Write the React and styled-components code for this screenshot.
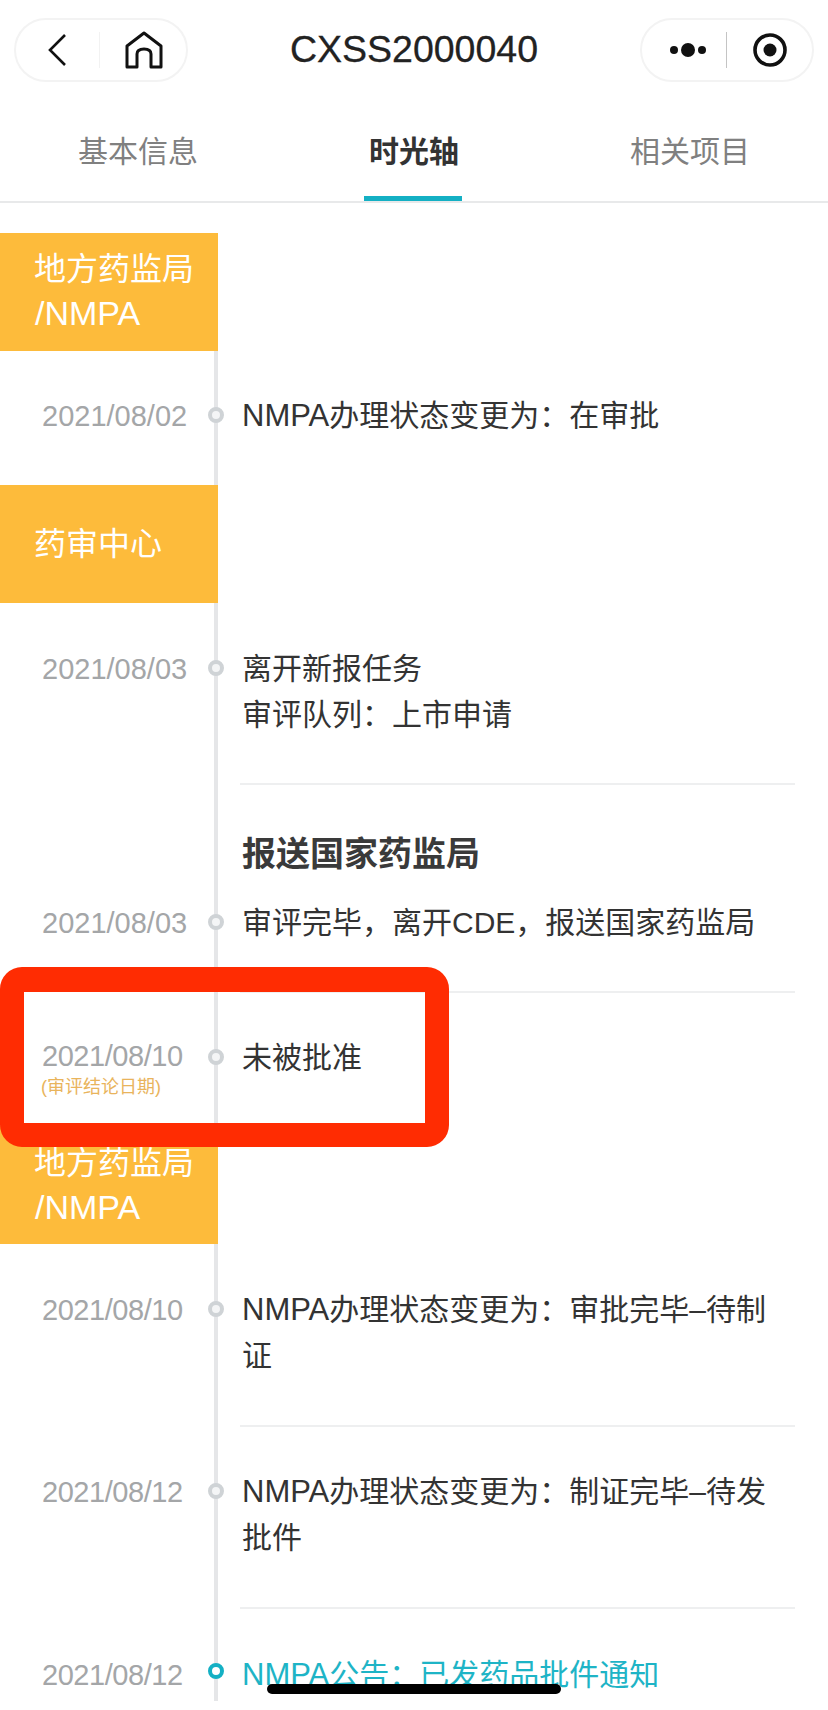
import styled, { createGlobalStyle } from 'styled-components';

const GlobalStyle = createGlobalStyle`
  html, body {
    margin: 0;
    padding: 0;
    background: #fff;
  }
  * {
    box-sizing: border-box;
  }
`;

const timeline = [
  { type: 'block', label: ['地方药监局', '/NMPA'] },
  { type: 'row', date: '2021/08/02', lines: ['NMPA办理状态变更为：在审批'], top: 42, bottom: 46 },
  { type: 'block', label: ['药审中心'] },
  { type: 'row', date: '2021/08/03', lines: ['离开新报任务', '审评队列：上市申请'], top: 43, bottom: 45, divider: true },
  { type: 'heading', text: '报送国家药监局' },
  { type: 'row', date: '2021/08/03', lines: ['审评完毕，离开CDE，报送国家药监局'], top: 23, bottom: 45, divider: true },
  { type: 'row', date: '2021/08/10', note: '(审评结论日期)', lines: ['未被批准'], top: 42, bottom: 45 },
  { type: 'block', label: ['地方药监局', '/NMPA'] },
  { type: 'row', date: '2021/08/10', lines: ['NMPA办理状态变更为：审批完毕–待制', '证'], top: 43, bottom: 46, divider: true },
  { type: 'row', date: '2021/08/12', lines: ['NMPA办理状态变更为：制证完毕–待发', '批件'], top: 42, bottom: 46, divider: true },
  { type: 'row', date: '2021/08/12', lines: ['NMPA公告：已发药品批件通知'], top: 43, bottom: 0, active: true },
];

// NMPA 글자만 살짝 크게
const renderLine = (line) =>
  line.includes('NMPA') ? (
    <>
      {line.split('NMPA')[0]}
      <Latin>NMPA</Latin>
      {line.split('NMPA')[1]}
    </>
  ) : (
    line
  );

const App = () => {
  return (
    <Page>
      <GlobalStyle />
      <NavBar>
        <Capsule $padding='0 0 0 32px'>
          <svg width='18' height='32' viewBox='0 0 18 32' fill='none'>
            <path d='M17 1 L2 16 L17 31' stroke='#111' strokeWidth='2.6' />
          </svg>
          <CapsuleDivider $left={33} $tone='#f2f2f2' />
          <HomeIcon width='38' height='38' viewBox='0 0 38 38' fill='none'>
            <path
              d='M2 36 V15 L19 2 L36 15 V36 H26 V23 Q26 18 19 18 Q12 18 12 23 V36 Z'
              stroke='#111'
              strokeWidth='3'
              strokeLinejoin='round'
            />
          </HomeIcon>
        </Capsule>
        <Title>CXSS2000040</Title>
        <Capsule $padding='0 0 0 28px'>
          <MoreDots>
            <Dot $size={8} />
            <Dot $size={14} />
            <Dot $size={8} />
          </MoreDots>
          <CapsuleDivider $left={20} $tone='#c4c4c4' />
          <RecordIcon width='34' height='34' viewBox='0 0 34 34' fill='none'>
            <circle cx='17' cy='17' r='15' stroke='#111' strokeWidth='3.6' />
            <circle cx='17' cy='17' r='6.5' fill='#111' />
          </RecordIcon>
        </Capsule>
      </NavBar>

      <Tabs>
        <Tab>基本信息</Tab>
        <Tab $active>时光轴</Tab>
        <Tab>相关项目</Tab>
      </Tabs>

      <Timeline>
        {timeline.map((item, i) => {
          if (item.type === 'block') {
            return (
              <Block key={i} $first={i === 0}>
                <div>
                  {item.label.map((text) => (
                    <BlockLine key={text} $latin={text.includes('NMPA')}>
                      {text}
                    </BlockLine>
                  ))}
                </div>
              </Block>
            );
          }
          if (item.type === 'heading') {
            return <Heading key={i}>{item.text}</Heading>;
          }
          return (
            <Row key={i} $top={item.top}>
              <DateCell>
                <DateText $note={!!item.note} $narrow={item.date.includes('/08/1')}>
                  {item.date}
                </DateText>
                {item.note && <DateNote>{item.note}</DateNote>}
                <Marker $active={item.active} />
              </DateCell>
              <Content $bottom={item.bottom} $divider={item.divider} $active={item.active}>
                {item.lines.map((line) => (
                  <div key={line}>{renderLine(line)}</div>
                ))}
              </Content>
            </Row>
          );
        })}
      </Timeline>

      <Annotation />
      <HomeIndicator />
    </Page>
  );
};

const FONT = `'Liberation Sans', 'Noto Sans CJK SC', sans-serif`;

const Page = styled.div`
  position: relative;
  width: 828px;
  height: 1710px;
  overflow: hidden;
  background: #fff;
  font-family: ${FONT};
`;

const NavBar = styled.div`
  display: flex;
  justify-content: space-between;
  align-items: center;
  height: 100px;
  padding: 0 14px;
  & > * {
    margin-top: -1px;
  }
`;

const Capsule = styled.div`
  display: flex;
  align-items: center;
  width: 174px;
  height: 64px;
  padding: ${(props) => props.$padding};
  border: 2px solid #f3f3f3;
  border-radius: 32px;
  background: #fff;
`;

const CapsuleDivider = styled.span`
  width: 1px;
  height: 36px;
  margin-left: ${(props) => props.$left}px;
  background: ${(props) => props.$tone};
`;

const HomeIcon = styled.svg`
  margin-left: 25px;
`;

const RecordIcon = styled.svg`
  margin-left: 26px;
`;

const MoreDots = styled.div`
  display: flex;
  align-items: center;
  gap: 3px;
`;

const Dot = styled.span`
  width: ${(props) => props.$size}px;
  height: ${(props) => props.$size}px;
  border-radius: 50%;
  background: #111;
`;

const Title = styled.div`
  position: relative;
  top: -1px;
  color: #222;
  font-size: 37.5px;
  line-height: 46px;
  -webkit-text-stroke: 0.3px #222;
`;

const Tabs = styled.div`
  display: grid;
  grid-template-columns: repeat(3, 1fr);
  height: 103px;
  border-bottom: 2px solid #e8e9ea;
`;

const Tab = styled.div`
  position: relative;
  height: 101px;
  padding-top: 29px;
  color: ${(props) => (props.$active ? '#333' : '#808080')};
  font-size: 30px;
  font-weight: ${(props) => (props.$active ? 700 : 400)};
  line-height: 46px;
  text-align: center;

  ${(props) =>
    props.$active &&
    `
    &::after {
      content: '';
      position: absolute;
      left: 88px;
      bottom: 0;
      width: 98px;
      height: 5px;
      background: #14b0c4;
    }
  `}
`;

const Timeline = styled.div`
  position: relative;

  &::before {
    content: '';
    position: absolute;
    top: 0;
    left: 214px;
    width: 4px;
    height: 1468px;
    background: #e5e6e8;
  }
`;

const Block = styled.div`
  position: relative;
  display: flex;
  align-items: center;
  width: 218px;
  height: 118px;
  margin-top: ${(props) => (props.$first ? '30px' : '0')};
  padding: ${(props) => (props.$first ? '0 0 3px 35px' : '0 0 0 35px')};
  background: #fdbb3b;
  color: #fff;
  font-size: 32px;
  line-height: 44px;
`;

const BlockLine = styled.div`
  font-size: ${(props) => (props.$latin ? '34px' : '32px')};
  margin-left: ${(props) => (props.$latin ? '0' : '-1px')};
`;

const Heading = styled.div`
  position: relative;
  padding: 46px 0 0 242px;
  color: #3a3a3a;
  font-size: 34px;
  font-weight: 700;
  line-height: 46px;
`;

const Row = styled.div`
  position: relative;
  display: grid;
  grid-template-columns: 216px 1fr;
  padding-top: ${(props) => props.$top}px;
`;

const DateCell = styled.div`
  position: relative;
  padding-left: 42px;
`;

const DateText = styled.div`
  margin-top: ${(props) => (props.$note ? '-2px' : '0')};
  color: #a4a6a8;
  font-size: 29px;
  letter-spacing: ${(props) => (props.$narrow ? '-0.45px' : '0')};
  line-height: 46px;
`;

const DateNote = styled.div`
  margin: -4px 0 0 -1px;
  color: #e9b45c;
  font-size: 18px;
  line-height: 24px;
`;

const Marker = styled.span`
  position: absolute;
  top: ${(props) => (props.$active ? '11px' : '14px')};
  right: -8px;
  width: 16px;
  height: 16px;
  border: ${(props) => (props.$active ? '4.5px solid #14b0c4' : '4px solid #cfd3d6')};
  border-radius: 50%;
  background: ${(props) => (props.$active ? '#fff' : '#f4f5f6')};
`;

const Content = styled.div`
  margin: 0 33px 0 24px;
  padding: 0 0 ${(props) => props.$bottom}px 2px;
  border-bottom: ${(props) => (props.$divider ? '2px solid #eeeff0' : 'none')};
  color: ${(props) => (props.$active ? '#1eb4c6' : '#333')};
  font-size: 30px;
  line-height: 46px;
`;

const Latin = styled.span`
  font-size: 31px;
`;

const Annotation = styled.div`
  position: absolute;
  top: 967px;
  left: 0;
  width: 449px;
  height: 180px;
  border: solid #ff2c02;
  border-width: 25px 24px 24px;
  border-radius: 22px;
`;

const HomeIndicator = styled.div`
  position: absolute;
  top: 1684px;
  left: 267px;
  width: 294px;
  height: 10px;
  border-radius: 5px;
  background: #000;
`;

export default App;
